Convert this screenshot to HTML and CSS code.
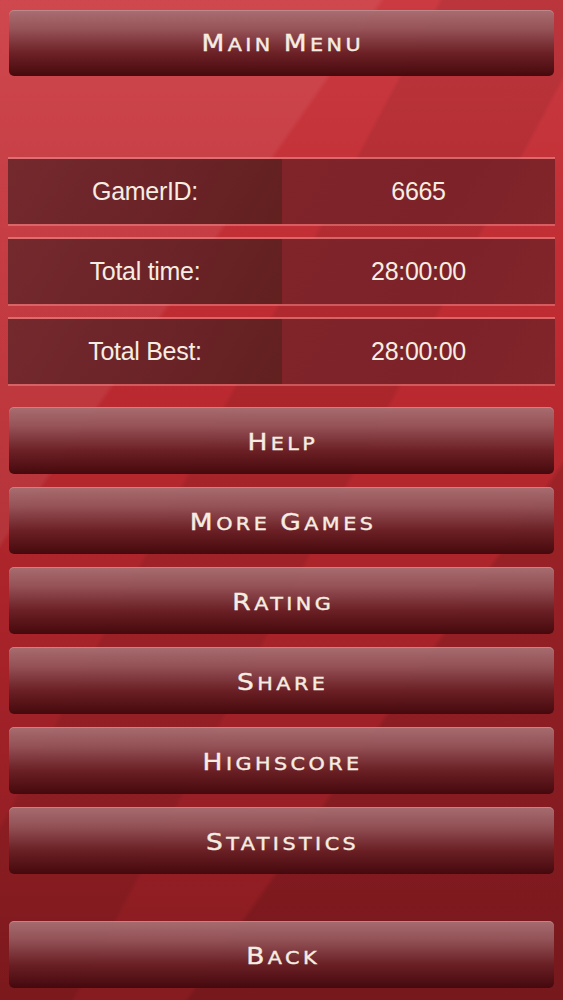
FILE: index.html
```html
<!DOCTYPE html>
<html>
<head>
<meta charset="utf-8">
<link rel="stylesheet" href="styles.css">
</head>
<body>
<div class="screen">
  <div class="btn title"><span class="label"><span class="cap">M</span>ain <span class="cap">M</span>enu</span></div>
  <div class="stats">
    <div class="row"><div class="cell key">GamerID:</div><div class="cell val">6665</div></div>
    <div class="row"><div class="cell key">Total time:</div><div class="cell val">28:00:00</div></div>
    <div class="row"><div class="cell key">Total Best:</div><div class="cell val">28:00:00</div></div>
  </div>
  <div class="menu">
    <div class="btn"><span class="label"><span class="cap">H</span>elp</span></div>
    <div class="btn"><span class="label"><span class="cap">M</span>ore <span class="cap">G</span>ames</span></div>
    <div class="btn"><span class="label"><span class="cap">R</span>ating</span></div>
    <div class="btn"><span class="label"><span class="cap">S</span>hare</span></div>
    <div class="btn"><span class="label"><span class="cap">H</span>ighscore</span></div>
    <div class="btn"><span class="label"><span class="cap">S</span>tatistics</span></div>
  </div>
  <div class="btn back"><span class="label"><span class="cap">B</span>ack</span></div>
</div>
</body>
</html>
```
FILE: styles.css
```css
html, body {
  margin: 0;
  padding: 0;
}
body {
  width: 563px;
  height: 1000px;
  overflow: hidden;
  background:
    linear-gradient(118deg, rgba(255,255,255,0) 0%, rgba(255,255,255,0) 40%, rgba(0,0,0,0.08) 40.5%, rgba(0,0,0,0.08) 55%, rgba(255,255,255,0) 55.5%),
    linear-gradient(125deg, rgba(255,255,255,0.07) 0%, rgba(255,255,255,0.07) 30%, rgba(255,255,255,0) 30.5%, rgba(255,255,255,0) 70%, rgba(0,0,0,0.12) 70.5%),
    linear-gradient(180deg, #cb3a41 0%, #bd2a30 35%, #a62329 65%, #861b20 100%);
  font-family: "Liberation Sans", Arial, sans-serif;
}
.screen {
  display: flex;
  flex-direction: column;
  padding: 10px 9px 0 9px;
}
.btn {
  height: 67px;
  border-radius: 5px;
  background: linear-gradient(180deg, rgba(168,112,115,0.95) 0%, rgba(148,85,90,0.94) 28%, rgba(105,32,37,0.96) 65%, rgba(68,8,12,0.98) 100%);
  box-shadow: inset 0 1px 0 rgba(255,220,220,0.25);
  display: flex;
  align-items: center;
  justify-content: center;
  color: #f6ede2;
  font-family: "DejaVu Sans", Verdana, sans-serif;
  box-sizing: border-box;
  padding-top: 2px;
}
.label {
  display: inline-block;
  text-transform: uppercase;
  font-size: 18px;
  letter-spacing: 3px;
  transform: scaleX(1.15);
  margin-right: -3px;
  -webkit-text-stroke: 0.4px #f6ede2;
}
.cap {
  font-size: 23px;
}
.title {
  height: 66px;
  margin-bottom: 81px;
  padding-top: 0;
}
.stats {
  display: flex;
  flex-direction: column;
  gap: 11px;
  margin: 0 -1px;
}
.row {
  display: flex;
  height: 69px;
  box-sizing: border-box;
  border-top: 2px solid rgba(240,150,150,0.55);
  border-bottom: 2px solid rgba(240,150,150,0.45);
}
.cell {
  display: flex;
  align-items: center;
  justify-content: center;
  color: #f6ede2;
  font-size: 25px;
  letter-spacing: -0.3px;
}
.key {
  width: 274px;
  background: linear-gradient(120deg, #74292d 0%, #6a2327 60%, #62201f 100%);
}
.val {
  flex: 1;
  background: linear-gradient(120deg, #80242a 0%, #7c2228 60%, #82252b 100%);
}
.menu {
  display: flex;
  flex-direction: column;
  gap: 13px;
  margin-top: 21px;
}
.back {
  margin-top: 47px;
}
```
